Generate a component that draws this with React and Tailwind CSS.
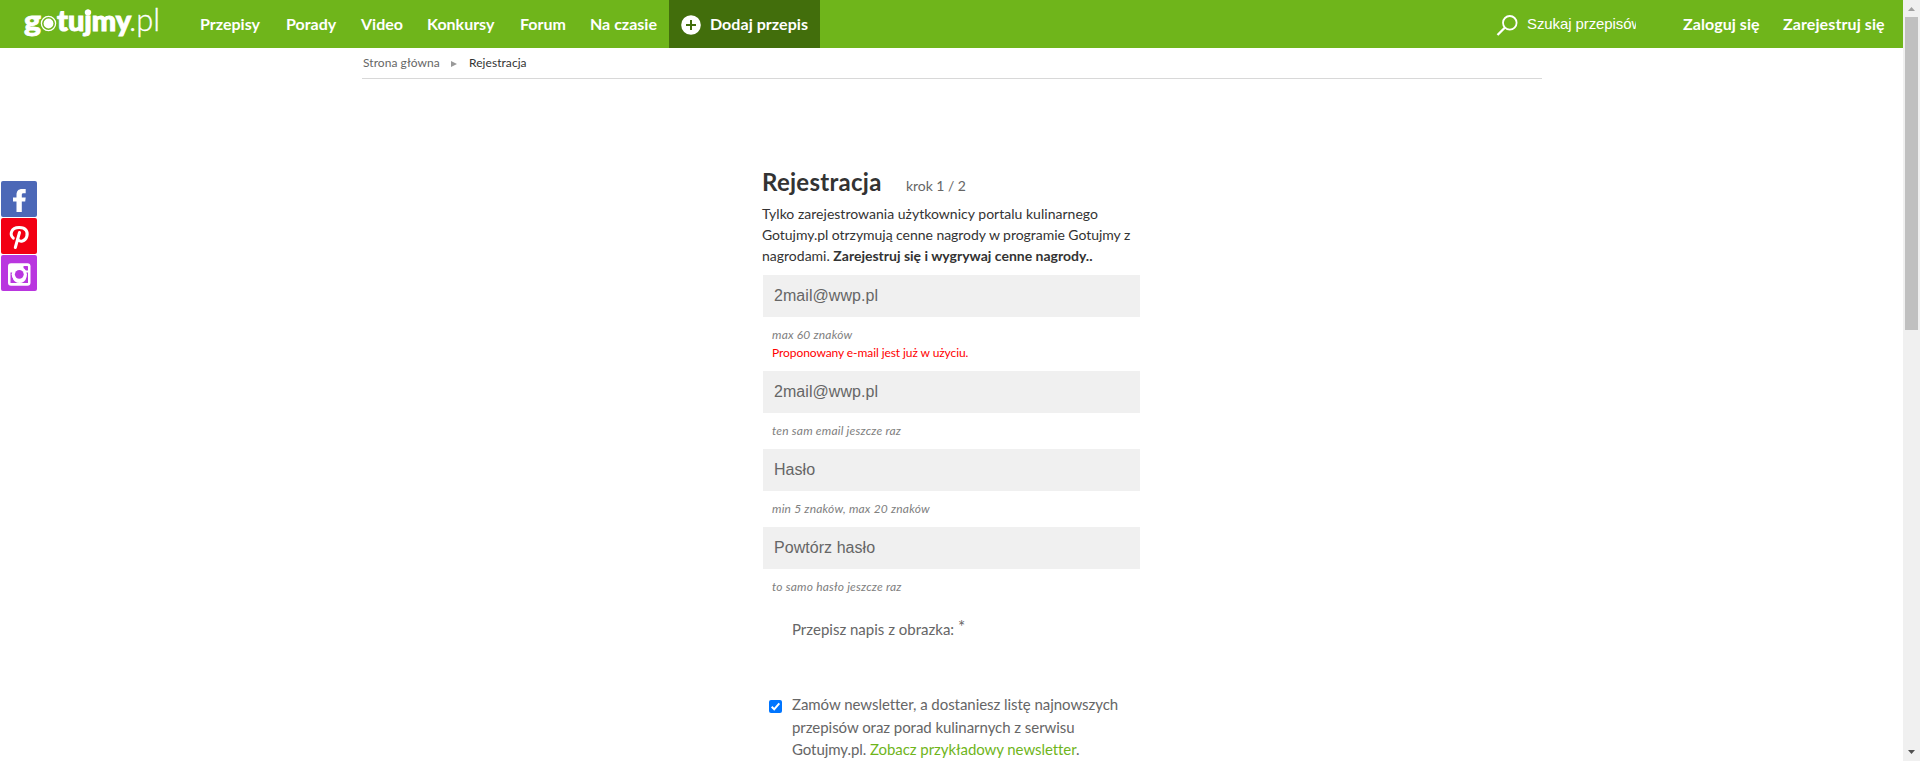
const nav = [
  { label: 'Przepisy', width: 'w-[86px]' },
  { label: 'Porady', width: 'w-[75px]' },
  { label: 'Video', width: 'w-[66px]' },
  { label: 'Konkursy', width: 'w-[93px]' },
  { label: 'Forum', width: 'w-[70px]' },
  { label: 'Na czasie', width: 'w-[79px]' },
];

function Logo() {
  return (
    <svg className="h-12 w-[200px] shrink-0" viewBox="0 0 200 48" fill="#fff" fontFamily="Lato, sans-serif">
      <text x="24" y="31" fontSize="29" fontWeight="900" textLength="17" lengthAdjust="spacingAndGlyphs" stroke="#fff" strokeWidth="0.8">g</text>
      <circle cx="48.500" cy="23.500" r="7.100" fill="none" stroke="#fff" strokeWidth="1.300" />
      <circle cx="48.500" cy="23.500" r="4.900" />
      <text x="57" y="31" fontSize="29" fontWeight="900" textLength="74" lengthAdjust="spacingAndGlyphs" stroke="#fff" strokeWidth="1">tujmy</text>
      <circle cx="88" cy="12.500" r="3" />
      <text x="129" y="31" fontSize="31" fontWeight="300" textLength="31" lengthAdjust="spacingAndGlyphs" stroke="#fff" strokeWidth="0.3">.pl</text>
    </svg>
  );
}

function Header() {
  return (
    <header className="flex h-12 items-center bg-[#6fb51b] font-bold text-white">
      <Logo />
      <nav className="flex">
        {nav.map((n) => (
          <a key={n.label} className={n.width + ' whitespace-nowrap'}>{n.label}</a>
        ))}
      </nav>
      <a className="flex h-12 w-[151px] items-center whitespace-nowrap bg-[#426e0c] pl-3 tracking-[0.05px]">
        <svg className="mt-0.5 mr-[9px] size-5 shrink-0" viewBox="0 0 20 20">
          <circle cx="10" cy="10" r="9.800" fill="#fff" />
          <path d="M10 5v10M5 10h10" stroke="#426e0c" strokeWidth="2" />
        </svg>
        Dodaj przepis
      </a>
      <div className="ml-auto flex items-center whitespace-nowrap">
        <svg className="mr-[9px] mt-0.5 h-[21px] w-[22px]" viewBox="0 0 22 21" fill="none" stroke="#fff">
          <circle cx="13.800" cy="7.800" r="6.800" strokeWidth="1.800" />
          <path d="M9 12.500L1.500 20" strokeWidth="2.300" />
        </svg>
        <span className="mr-[47px] w-[109px] overflow-hidden font-['Liberation_Sans',sans-serif] text-[15px] font-normal tracking-[-0.1px]">Szukaj przepisów</span>
        <a className="w-[100px] tracking-[0.07px]">Zaloguj się</a>
        <a className="w-[120px] tracking-[0.1px]">Zarejestruj się</a>
      </div>
    </header>
  );
}

function Social() {
  return (
    <aside className="absolute top-[181px] left-px flex flex-col gap-px">
      <a className="size-9 rounded-[2px] bg-[#4c68b7]">
        <svg viewBox="0 0 36 36" fill="#fff">
          <path d="M15.500 31V20.500H12v-4h3.500v-2.500C15.500 10 17.500 8 21 8h3.700v4.200h-2.200c-1.300 0-1.700.5-1.700 1.600v2.700h3.900l-.5 4h-3.400V31z" />
        </svg>
      </a>
      <a className="size-9 rounded-[2px] bg-[#f20013]">
        <svg viewBox="0 0 36 36" fill="none" stroke="#fff" strokeLinecap="round">
          <path d="M12.300 20.200C8.300 16.500 10 9.800 18 9.600c7-.2 9.200 4.300 7.800 8.900-1.500 5-7 6.200-9 2.800" strokeWidth="3" />
          <path d="M18.500 14.500L14.300 29.500" strokeWidth="3" />
        </svg>
      </a>
      <a className="size-9 rounded-[2px] bg-[#b936df]">
        <svg viewBox="0 0 36 36">
          <rect x="7" y="8.300" width="22.500" height="22.500" rx="3" fill="#fff" />
          <rect x="22.500" y="11" width="4.500" height="4.500" rx=".5" fill="#b936df" />
          <path d="M9.500 17.500h3a7 7 0 1 0 12 0h2.500v10.500H9.500z" fill="#b936df" />
          <circle cx="18.300" cy="19.300" r="7.600" fill="#fff" />
          <circle cx="18.300" cy="19.300" r="4.400" fill="#b936df" />
        </svg>
      </a>
    </aside>
  );
}

function Field({ value, hint, error }) {
  return (
    <div>
      <div className="ml-px flex h-[42px] w-[377px] items-center bg-[#f0f0f0] pl-[11px] font-['Liberation_Sans',sans-serif] text-base tracking-[0.05px] text-[#666]">
        {value}
      </div>
      <div className="ml-2.5 pt-[9px] pb-[9px] text-xs leading-[18px] tracking-[0.2px] text-[#808080] italic">
        {hint}
        {error && <div className="tracking-[-0.08px] text-[#f00] not-italic">{error}</div>}
      </div>
    </div>
  );
}

function Scrollbar() {
  return (
    <div className="flex h-[761px] w-[17px] shrink-0 flex-col items-center bg-[#f0f0f0]">
      <svg className="h-[17px] w-[17px]" viewBox="0 0 17 17"><path d="M5 11l3.500-4L12 11z" fill="#a0a0a0" /></svg>
      <div className="h-[313px] w-[13px] bg-[#c0c0c0]" />
      <svg className="mt-auto h-[17px] w-[17px]" viewBox="0 0 17 17"><path d="M5 6h7l-3.500 4z" fill="#505050" /></svg>
    </div>
  );
}

export default function App() {
  return (
    <div className="flex h-[761px] w-[1920px] overflow-hidden bg-white font-['Lato',sans-serif] text-base">
      <div className="w-[1903px] shrink-0">
        <Header />
        <div className="mr-[361px] ml-[362px] flex h-[31px] items-center border-b border-[#d8d8d8] pl-px text-xs tracking-[0.06px] text-[#666]">
          <span className="w-[88px]">Strona główna</span>
          <svg className="mr-[12px] mt-0.5 h-1.5 w-1.5" viewBox="0 0 6 6"><path d="M0 0l6 3-6 3z" fill="#999" /></svg>
          <span className="text-[#333]">Rejestracja</span>
        </div>
        <Social />
        <main className="ml-[762px] w-[380px] pt-[87px]">
          <div className="flex items-baseline">
            <h1 className="w-[144px] text-2xl leading-8 font-bold tracking-[0.27px] text-[#333]">Rejestracja</h1>
            <span className="text-sm tracking-[-0.05px] text-[#666]">krok 1 / 2</span>
          </div>
          <div className="mt-[5px] mb-[9px] text-sm leading-[21px] whitespace-nowrap text-[#333]">
            <p className="tracking-[0.02px]">Tylko zarejestrowania użytkownicy portalu kulinarnego</p>
            <p className="tracking-[-0.04px]">Gotujmy.pl otrzymują cenne nagrody w programie Gotujmy z</p>
            <p>nagrodami. <b>Zarejestruj się i wygrywaj cenne nagrody..</b></p>
          </div>
          <Field value="2mail@wwp.pl" hint="max 60 znaków" error="Proponowany e-mail jest już w użyciu." />
          <Field value="2mail@wwp.pl" hint="ten sam email jeszcze raz" />
          <Field value="Hasło" hint="min 5 znaków, max 20 znaków" />
          <Field value="Powtórz hasło" hint="to samo hasło jeszcze raz" />
          <div className="mt-[13px] ml-[30px] h-[75px] text-[15px] leading-[22px] text-[#666]">
            Przepisz napis z obrazka: <span className="relative -top-0.5 text-[17px] leading-none">*</span>
          </div>
          <div className="flex text-[15px] leading-[22.5px] tracking-[-0.05px] whitespace-nowrap text-[#666]">
            <svg className="mt-[7px] mr-[10px] ml-[7px] size-[13px] shrink-0" viewBox="0 0 13 13">
              <rect width="13" height="13" rx="2" fill="#0075ff" />
              <path d="M2.700 6.800L5.200 9.300 10.300 3.300" fill="none" stroke="#fff" strokeWidth="2" />
            </svg>
            <div>
              <p>Zamów newsletter, a dostaniesz listę najnowszych</p>
              <p>przepisów oraz porad kulinarnych z serwisu</p>
              <p className="tracking-[-0.07px]">Gotujmy.pl. <a className="text-[#6fb51b]">Zobacz przykładowy newsletter</a>.</p>
            </div>
          </div>
        </main>
      </div>
      <Scrollbar />
    </div>
  );
}
